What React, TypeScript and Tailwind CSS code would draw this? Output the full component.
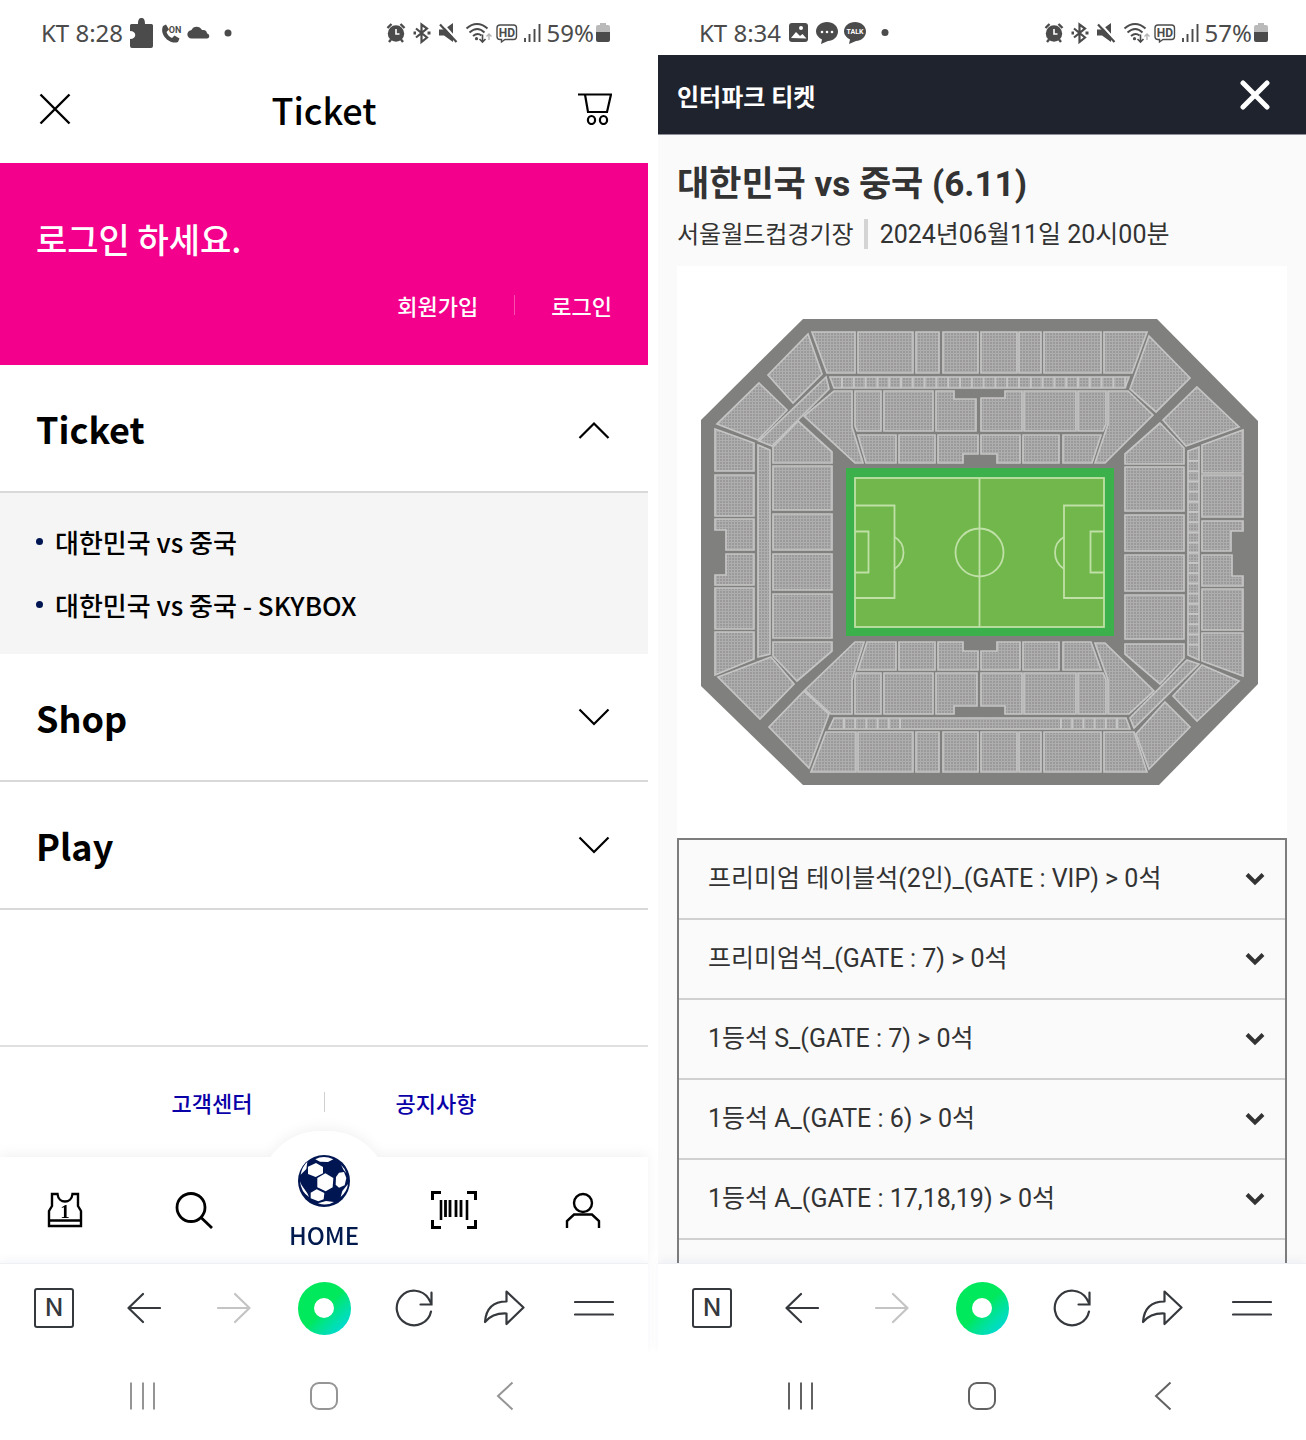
import React, { useState } from 'react';

interface StatusBarProps {
  time: string;
  battery: string;
  children: React.ReactNode;
}

const StatusBar = ({ time, battery, children }: StatusBarProps) => (
  <div className="h-[55px] pt-3 pr-[38px] pl-[41px] flex items-start justify-between text-[#4b4b4b]">
    <div className="h-[42px] flex items-center">
      <span className="font-['Noto_Sans',sans-serif] text-2xl mr-1.5">KT {time}</span>
      {children}
    </div>
    <div className="h-[42px] flex items-center">
      <svg width="162" height="24" viewBox="380 21 162 24" fill="none" stroke="currentColor" strokeWidth="2" className="shrink-0">
        {/* Alarm */}
        <circle cx="393" cy="33.500" r="8.200" fill="currentColor" stroke="none" />
        <path d="M384.500 28l4-4M401.500 28l-4-4M388 39.500l-2 2.500M398 39.500l2 2.500" strokeWidth="2.400" />
        <path d="M393 29v5h3.500" stroke="#fff" strokeWidth="1.600" />
        {/* Bluetooth */}
        <path d="M413 28.500l11 9-5.500 4.500V24.500l5.500 4-11 9" strokeWidth="2.200" />
        <path d="M410.500 33h2.500M424.500 33h3" strokeWidth="3" />
        {/* Muted */}
        <path d="M436 29.500h5l9-6.500v19l-9-6.500h-5z" fill="currentColor" stroke="none" />
        <path d="M438.500 22.500l16 18" stroke="#fff" strokeWidth="2.200" />
        <path d="M437 24.500l16.500 17.500" strokeWidth="2.200" />
        {/* Wifi */}
        <path d="M463.500 28.500c6.500-6 14.500-6 21 0M466.500 32.500c5-4.500 10.500-4.500 15 0M470 36c3-2.500 6-2.500 8.500-.5" strokeWidth="1.900" />
        <circle cx="473.500" cy="38.700" r="1.600" fill="currentColor" stroke="none" />
        <path d="M479.500 34.500v7M476.500 39l3 3 3-3" strokeWidth="1.600" />
        <path d="M486 40v-6M483.500 36.500l2.500-2.500 2.500 2.500" stroke="#b5b5b5" strokeWidth="1.400" />
        {/* HD voice */}
        <path d="M497 25h13.500a3 3 0 0 1 3 3v8.500a3 3 0 0 1-3 3H502l-3.500 2.500v-2.500H497a3 3 0 0 1-3-3V28a3 3 0 0 1 3-3z" strokeWidth="1.400" />
        <text x="504" y="37" fontSize="12" fontWeight="700" fill="currentColor" stroke="none" textAnchor="middle" className="font-['Roboto',sans-serif]">HD</text>
        {/* Signal */}
        <path d="M522 38v4M526.500 34v8M531.500 29v13M536.500 24v18" strokeWidth="1.900" />
      </svg>
      <span className="font-['Noto_Sans',sans-serif] text-2xl mx-0.5">{battery}</span>
      <svg width="14" height="20" viewBox="0 0 14 20" className="shrink-0">
        <path d="M4 2V0h6v2h2a2 2 0 0 1 2 2v6H0V4a2 2 0 0 1 2-2z" fill="#bababa" />
        <path d="M0 9h14v8a2 2 0 0 1-2 2H2a2 2 0 0 1-2-2z" fill="#4b4b4b" />
      </svg>
    </div>
  </div>
);

const iconButton = 'flex items-center justify-center cursor-pointer';

const BrowserBars = ({ faded }: { faded?: boolean }) => (
  <div className="relative bg-white">
    <div className="h-[89px] px-[9px] grid grid-cols-7 border-t border-[#eef0f4] shadow-[0_-3px_8px_rgba(70,90,160,0.06)] text-[#35383c]">
      <button aria-label="Naver" className={iconButton}>
        <span className="w-10 h-10 rounded-[3px] border-2 border-[#35383c] flex items-center justify-center font-['Inter',sans-serif] text-2xl font-medium">N</span>
      </button>
      <button aria-label="Back" className={iconButton}>
        <svg width="34" height="34" viewBox="0 0 34 34" fill="none" stroke="currentColor" strokeWidth="2.200" strokeLinecap="round" strokeLinejoin="round">
          <path d="M33 17H2M16 3L1.500 17 16 31" />
        </svg>
      </button>
      <button aria-label="Forward" className={iconButton}>
        <svg width="34" height="34" viewBox="0 0 34 34" fill="none" stroke="#c4c4c4" strokeWidth="2.200" strokeLinecap="round" strokeLinejoin="round">
          <path d="M1 17h31M18 3l14.500 14L18 31" />
        </svg>
      </button>
      <button aria-label="Green dot" className={iconButton}>
        <span className="w-[53px] h-[53px] rounded-full bg-linear-to-br from-[#00e85c] from-50% to-[#00d2f0] flex items-center justify-center">
          <span className="w-5 h-5 rounded-full bg-white" />
        </span>
      </button>
      <button aria-label="Reload" className={iconButton}>
        <svg width="38" height="38" viewBox="0 0 38 38" fill="none" stroke="currentColor" strokeWidth="2.200" strokeLinecap="round">
          <path d="M36 22.500A17.300 17.300 0 1 1 33.500 9.500L36.500 15M36.500 3.500v12H25.500" />
        </svg>
      </button>
      <button aria-label="Share" className={iconButton}>
        <svg width="42" height="36" viewBox="0 0 42 36" fill="none" stroke="currentColor" strokeWidth="2.200" strokeLinejoin="round">
          <path d="M23.500 1.500L40.500 17.500 23.500 34V23.500C13 23 7 26 2 32 3 18 11 11.500 23.500 11.500z" />
        </svg>
      </button>
      <button aria-label="Menu" className={iconButton}>
        <svg width="40" height="20" viewBox="0 0 40 20" fill="none" stroke="currentColor" strokeWidth="2.200" strokeLinecap="round">
          <path d="M1 4h38M1 16.500h38" />
        </svg>
      </button>
    </div>
    <div className={`relative h-[88px] px-[52px] grid grid-cols-3 bg-white ${faded ? 'text-[#959595]' : 'text-[#626262]'}`}>
      <button aria-label="Recent apps" className={iconButton}>
        <svg width="28" height="30" viewBox="0 0 28 30" fill="none" stroke="currentColor" strokeWidth="2">
          <path d="M2 1.500v27M14 1.500v27M25 1.500v27" />
        </svg>
      </button>
      <button aria-label="Home" className={iconButton}>
        <span className="w-7 h-7 rounded-[9px] border-2 border-current" />
      </button>
      <button aria-label="Go back" className={iconButton}>
        <svg width="18" height="30" viewBox="0 0 18 30" fill="none" stroke="currentColor" strokeWidth="2">
          <path d="M16.500 1.500L2 15l14.500 13.500" />
        </svg>
      </button>
    </div>
  </div>
);

const Chevron = ({ open }: { open: boolean }) => (
  <svg width="32" height="26" viewBox="0 0 32 26" fill="none" stroke="currentColor" strokeWidth="2.200">
    <path d={open ? 'M1.500 23L16 8.500 30.500 23' : 'M1.500 5.500L16 20 30.500 5.500'} />
  </svg>
);

const menus = [
  { title: 'Ticket', items: ['대한민국 vs 중국', '대한민국 vs 중국 - SKYBOX'] },
  { title: 'Shop', items: [] },
  { title: 'Play', items: [] },
];

const SoccerBall = () => (
  <svg width="52" height="52" viewBox="56 45 156 156">
    <circle cx="134" cy="123" r="78" fill="#001652" />
    <g fill="#fff">
      <path d="M138 100l24 14-2 28-21 12-25-12V114z" />
      <path d="M110 69l21 12v19l-22 11-23-9V80z" />
      <path d="M112 148l23 11-2 19-16 6-23-9V158z" />
      <path d="M179 98l15-2 7 18-5 22-17 7-10-9 1-23z" />
      <path d="M108 58q24-14 54 0l-16 8-24-1z" />
      <path d="M64 104q4-24 20-39l-3 22z" />
      <path d="M62 124l5 12 17 24 5 11q-24-15-27-47z" />
      <path d="M116 190l24-7 24 3q-22 13-48 4z" />
      <path d="M206 132q-3 23-22 39l5-18z" />
      <path d="M185 74q12 11 16 26l-8-10z" />
    </g>
  </svg>
);

const KfaScreen = () => {
  const [opened, setOpened] = useState('Ticket');

  return (
    <section className="min-w-0 flex flex-col bg-white font-['Noto_Sans_CJK_KR',sans-serif]">
      <StatusBar time="8:28" battery="59%">
        <svg width="108" height="32" viewBox="130 17 108 32" fill="currentColor" className="shrink-0">
          <path d="M132.500 24H139c0-5 1.500-6 3.500-6s3.500 1 3.500 6h6.500a1.500 1.500 0 0 1 1.500 1.500V46a2 2 0 0 1-2 2H133a2 2 0 0 1-2-2v-7c7 0 7-8 0-8v-5.500a1.500 1.500 0 0 1 1.500-1.500z" />
          <path d="M164 26l3-1.500 3 5-2.500 2.500c1 3 3 5 5.500 6l2.500-2.500 5 3-1.500 3.500c-8 3-19-7-15-16z" />
          <text x="176" y="33" fontSize="9" fontWeight="700" textAnchor="middle" className="font-['Roboto',sans-serif]">ON</text>
          <path d="M192.500 38.500c-5 0-6-7.500 0-8.500 1.500-4.500 8.500-4.500 10.500 0 3.500-.5 5 1.500 5 3.500 3 .5 3 5 0 5z" />
          <circle cx="229" cy="33" r="3.500" />
        </svg>
      </StatusBar>

      <header className="h-[108px] px-9 grid grid-cols-3 items-center">
        <button aria-label="닫기" className="justify-self-start px-[3px] cursor-pointer">
          <svg width="32" height="32" viewBox="0 0 32 32" fill="none" stroke="#000" strokeWidth="2.400">
            <path d="M1.500 1.500l29 29M30.500 1.500l-29 29" />
          </svg>
        </button>
        <h1 className="text-4xl leading-none font-medium text-center">Ticket</h1>
        <button aria-label="장바구니" className="justify-self-end cursor-pointer">
          <svg width="34" height="32" viewBox="0 0 34 32" fill="none" stroke="#000" strokeWidth="2.200">
            <path d="M0 1.500h33l-4 17.500H10L7 1.500" />
            <ellipse cx="13.500" cy="27" rx="3.600" ry="4" />
            <ellipse cx="25.500" cy="27" rx="3.600" ry="4" />
          </svg>
        </button>
      </header>

      <div className="h-[202px] px-9 pt-[51px] bg-[#f3008d] text-white">
        <p className="text-[34px] leading-[50px] font-medium">로그인 하세요.</p>
        <div className="mt-[23px] flex items-center justify-end gap-9 text-[22px] leading-9 font-medium">
          <a href="#join">회원가입</a>
          <span className="w-px h-5 bg-[#f84fb0]" />
          <a href="#login">로그인</a>
        </div>
      </div>

      {menus.map(menu => (
        <div key={menu.title}>
          <button
            aria-expanded={opened === menu.title}
            onClick={() => setOpened(opened === menu.title ? '' : menu.title)}
            className="w-full h-32 pl-9 pr-[38px] flex items-center justify-between border-b-2 border-[#d9d9d9] text-left cursor-pointer"
          >
            <span className="text-4xl leading-none font-bold">{menu.title}</span>
            <Chevron open={opened === menu.title} />
          </button>
          {opened === menu.title && menu.items.length > 0 && (
            <ul className="px-9 pt-[17px] pb-[18px] bg-[#f5f5f5]">
              {menu.items.map(item => (
                <li key={item} className="h-[63px] flex items-center gap-3">
                  <span className="w-[7px] h-[7px] rounded-full bg-[#001652]" />
                  <a href="#match" className="text-[26px] leading-none font-medium">{item}</a>
                </li>
              ))}
            </ul>
          )}
        </div>
      ))}

      <div className="flex-1" />

      <div className="h-[112px] pt-[37px] border-t-2 border-[#e0e0e0] flex justify-center gap-[71px] text-[22px] leading-9 font-medium text-[#0a00a8]">
        <a href="#help">고객센터</a>
        <span className="w-px h-5 mt-2 bg-[#cfcfcf]" />
        <a href="#notice">공지사항</a>
      </div>

      <nav className="relative h-[106px] drop-shadow-[0_-3px_6px_rgba(0,0,0,0.05)]">
        <span className="absolute left-1/2 -top-[26px] w-32 h-[120px] -translate-x-1/2 rounded-full bg-white" />
        <div className="relative h-full grid grid-cols-5 bg-white">
          <a href="#match" aria-label="경기" className={iconButton}>
            <svg width="36" height="36" viewBox="0 0 36 36" fill="none" stroke="#000" strokeWidth="2.400">
              <path d="M5 2h5.500c1 10 14 10 15 0H31v12l3 5v15H2V19l3-5zM2 28.500h32" />
              <text x="18" y="25.500" fontSize="19" fontWeight="700" fill="#000" stroke="none" textAnchor="middle" className="font-['Liberation_Serif',serif]">1</text>
            </svg>
          </a>
          <a href="#search" aria-label="검색" className={iconButton}>
            <svg width="38" height="38" viewBox="0 0 38 38" fill="none" stroke="#000" strokeWidth="2.800">
              <circle cx="16" cy="16.500" r="14" />
              <path d="M26 26.500l11 10.500" />
            </svg>
          </a>
          <a href="#home" className="-mt-0.5 flex flex-col items-center gap-3 text-[#001a4e]">
            <SoccerBall />
            <span className="text-2xl leading-8 font-medium">HOME</span>
          </a>
          <a href="#pass" aria-label="바코드" className={iconButton}>
            <svg width="46" height="38" viewBox="0 0 46 38" fill="none" stroke="#000" strokeWidth="3">
              <path d="M1.500 9V1.500H10M36 1.500h8.500V9M44.500 29v7.500H36M10 36.500H1.500V29" />
              <path d="M10 9v20M36 9v20" strokeWidth="2.600" />
              <path d="M14.500 9v17M19 9v17M25 9v17M30 9v17" strokeWidth="2.800" />
            </svg>
          </a>
          <a href="#my" aria-label="마이페이지" className={iconButton}>
            <svg width="36" height="36" viewBox="0 0 36 36" fill="none" stroke="#000" strokeWidth="2.400">
              <circle cx="18" cy="11" r="9" />
              <path d="M2 36v-7l7-6.500h18l7 6.500v7" />
            </svg>
          </a>
        </div>
      </nav>

      <BrowserBars faded />
    </section>
  );
};

// Seat blocks of the stadium, clockwise from the north stand
const blocks = [
  // north
  '812,332 855,332 855,373 827,373', '858,332 913,332 913,373 858,373', '916,332 939,332 939,373 916,373',
  '943,332 978,332 978,373 943,373', '981,332 1017,332 1017,373 981,373', '1019,332 1041,332 1041,373 1019,373',
  '1044,332 1101,332 1101,373 1044,373', '1104,332 1147,332 1132,373 1104,373',
  '830,377 1129,377 1125,388 834,388',
  '834,391 852,391 852,427 863,463 855,463 804,416', '855,391 881,391 881,431 857,431 855,426',
  '884,391 933,391 933,431 884,431', '936,391 954,391 954,399 976,399 976,431 936,431',
  '981,398 1005,398 1005,391 1022,391 1022,431 981,431', '1024,391 1076,391 1076,431 1024,431',
  '1078,391 1106,391 1106,424 1103,431 1078,431', '1108,391 1128,391 1153,415 1105,463 1095,463 1108,424',
  '858,435 896,435 896,463 866,463', '899,435 935,435 935,463 899,463',
  '938,435 978,435 978,454 963,454 963,463 938,463', '981,435 1020,435 1020,463 997,463 997,454 981,454',
  '1023,435 1059,435 1059,463 1023,463', '1063,435 1101,435 1092,463 1063,463',
  // north east
  '1149,336 1190,378 1156,412 1130,389', '1197,387 1239,427 1186,446 1163,420',
  // east
  '1160,423 1184,448 1184,464 1125,464 1125,454', '1125,467 1184,467 1184,511 1125,511',
  '1125,515 1184,515 1184,551 1125,551', '1125,555 1184,555 1184,591 1125,591',
  '1125,595 1184,595 1184,639 1125,639', '1125,644 1184,644 1184,658 1160,684 1125,654',
  '1188,451 1199,447 1199,660 1188,655',
  '1202,445 1243,430 1243,473 1202,473', '1202,475 1243,475 1243,517 1202,517',
  '1202,521 1243,521 1243,531 1231,531 1231,551 1202,551', '1202,555 1232,555 1232,576 1243,576 1243,586 1202,586',
  '1202,589 1243,589 1243,630 1202,630', '1202,633 1243,633 1243,676 1202,661',
  // south east
  '1187,660 1199,664 1134,728 1130,718', '1165,702 1190,727 1149,769 1136,734', '1202,665 1239,681 1197,721 1173,696',
  // south
  '855,642 864,642 852,680 852,714 831,714 805,690', '867,642 896,642 896,670 858,670',
  '899,642 935,642 935,670 899,670', '938,642 963,642 963,651 978,651 978,670 938,670',
  '981,651 997,651 997,642 1020,642 1020,670 981,670', '1023,642 1059,642 1059,670 1023,670',
  '1063,642 1091,642 1101,670 1063,670', '856,673 881,673 881,714 855,714 855,678',
  '884,673 933,673 933,714 884,714', '936,673 977,673 977,706 954,706 954,714 936,714',
  '981,673 1022,673 1022,714 1005,714 1005,706 981,706', '1024,673 1076,673 1076,714 1024,714',
  '1078,673 1103,673 1106,680 1106,714 1078,714', '1095,643 1105,643 1154,691 1129,714 1108,714 1108,680',
  '834,718 1126,718 1130,729 829,729',
  '826,732 856,732 856,772 811,772', '858,732 913,732 913,772 858,772', '916,732 939,732 939,772 916,772',
  '943,732 978,732 978,772 943,772', '981,732 1017,732 1017,772 981,772', '1019,732 1041,732 1041,772 1019,772',
  '1044,732 1101,732 1101,772 1044,772', '1104,732 1134,732 1147,772 1104,772',
  // south west
  '771,657 794,684 760,719 718,677', '804,691 829,714 809,768 769,727',
  // west
  '715,429 754,443 754,471 715,471', '715,475 754,475 754,516 715,516',
  '715,519 754,519 754,550 726,550 726,530 715,530', '726,554 754,554 754,585 715,585 715,575 726,575',
  '715,588 754,588 754,629 715,629', '715,632 754,632 754,659 715,675',
  '758,445 770,450 770,654 758,657',
  '798,421 832,452 832,463 773,463 773,447', '773,466 832,466 832,510 773,510',
  '773,514 832,514 832,550 773,550', '773,554 832,554 832,590 773,590',
  '773,594 832,594 832,638 773,638', '773,642 832,642 832,651 797,681 773,656',
  // north west
  '808,334 822,374 793,403 768,375', '759,383 787,410 758,440 717,424', '826,377 829,389 772,446 759,441',
];

const range = (from: number, to: number, step: number) => {
  const out: number[] = [];
  for (let v = from; v < to; v += step) out.push(v);
  return out;
};

const StadiumMap = () => (
  <svg viewBox="677 266 610 572" className="block w-full bg-white" role="img" aria-label="좌석 배치도">
    <defs>
      <pattern id="seats" width="3" height="3" patternUnits="userSpaceOnUse">
        <rect width="3" height="3" fill="#aeaeae" />
        <rect width="2" height="2" fill="#9b9999" />
      </pattern>
    </defs>
    <polygon points="803,319 1157,319 1258,421 1258,684 1159,785 803,785 701,686 701,420" fill="#80807e" />
    <g fill="url(#seats)" stroke="#c6c5c5" strokeWidth="1.700">
      {blocks.map(points => <polygon key={points} points={points} />)}
    </g>
    <g stroke="#c6c5c5" strokeWidth="2">
      {range(842, 1126, 11.8).map(x => <path key={x} d={`M${x} 377v11`} />)}
      {range(461, 652, 10.2).map(y => <path key={y} d={`M1188 ${y}h11`} />)}
      {range(844, 902, 11.2).map(x => <path key={x} d={`M${x} 718v11`} />)}
      {range(1061, 1120, 11.2).map(x => <path key={x} d={`M${x} 718v11`} />)}
    </g>
    <rect x="846" y="468" width="268" height="168" fill="#3cb04b" />
    <rect x="855" y="478" width="249" height="149" fill="#71b74b" />
    <g fill="none" stroke="#bfe0a6" strokeWidth="1.800">
      <rect x="855" y="478" width="249" height="149" />
      <path d="M979.500 478v149M855 505.500h39.500V598H855M855 531.500h13.500v41H855M1104 505.500h-40V598h40M1104 531.500h-13.500v41H1104" />
      <circle cx="979.500" cy="552.500" r="24" />
      <path d="M894.500 537q9 5 9 15.500t-9 16.500M1064 537q-9 5-9 15.500t9 16.500" />
    </g>
  </svg>
);

const seatGrades = [
  '프리미엄 테이블석(2인)_(GATE : VIP) > 0석',
  '프리미엄석_(GATE : 7) > 0석',
  '1등석 S_(GATE : 7) > 0석',
  '1등석 A_(GATE : 6) > 0석',
  '1등석 A_(GATE : 17,18,19) > 0석',
];

const InterparkScreen = () => (
  <section className="min-w-0 flex flex-col bg-[#fafafa] font-['Roboto','Noto_Sans_CJK_KR',sans-serif] text-[#333]">
    <div className="bg-white">
      <StatusBar time="8:34" battery="57%">
        <svg width="108" height="32" viewBox="787 17 108 32" fill="currentColor" className="shrink-0">
          <rect x="789" y="23" width="19" height="19" rx="3" />
          <path d="M791 38l5-6 4 4 2.500-2 4 4.500z" fill="#fff" />
          <circle cx="801" cy="28" r="2" fill="#fff" />
          <path d="M827 22c6 0 11 4 11 9.500S833 41 828 41l-7 3 1-4.500c-3.500-2-6-4.500-6-8C816 26 821 22 827 22z" />
          <g fill="#fff">
            <circle cx="822" cy="32" r="1.300" />
            <circle cx="827" cy="32" r="1.300" />
            <circle cx="832" cy="32" r="1.300" />
          </g>
          <path d="M855 22c6 0 11 4 11 9.500S861 41 856 41l-7 3 1-4.500c-3.500-2-6-4.500-6-8C844 26 849 22 855 22z" />
          <text x="855" y="34" fontSize="7" fontWeight="700" fill="#fff" textAnchor="middle" className="font-['Roboto',sans-serif]">TALK</text>
          <circle cx="885" cy="32.500" r="3.500" />
        </svg>
      </StatusBar>
    </div>

    <header className="h-20 pl-[19px] pr-9 flex items-center justify-between bg-[#1f232d] border-b border-[#8d9099] text-white">
      <span className="pt-1.5 text-2xl font-bold">인터파크 티켓</span>
      <button aria-label="닫기" className="cursor-pointer">
        <svg width="30" height="30" viewBox="0 0 30 30" fill="none" stroke="currentColor" strokeWidth="5" strokeLinecap="round">
          <path d="M3 3l24 24M27 3L3 27" />
        </svg>
      </button>
    </header>

    <main className="flex-1 flex flex-col px-[19px] pt-6">
      <h1 className="text-[35px] leading-[52px] font-bold">대한민국 vs 중국 (6.11)</h1>
      <p className="h-[55px] pt-2 flex items-start text-2xl leading-8">
        <span>서울월드컵경기장</span>
        <span className="w-1 h-[30px] ml-2.5 mr-3 bg-[#d4d4d4]" />
        <span className="text-[25px]">2024년06월11일 20시00분</span>
      </p>

      <StadiumMap />

      <ul className="flex-1 border-2 border-b-0 border-[#7d7d7d]">
        {seatGrades.map(grade => (
          <li key={grade} className="border-b-2 border-[#d0d0d0]">
            <button className="w-full h-[78px] pl-[29px] pr-5 flex items-center justify-between text-[25px] text-left cursor-pointer">
              {grade}
              <svg width="20" height="14" viewBox="0 0 20 14" fill="none" stroke="currentColor" strokeWidth="4">
                <path d="M2 2.500l8 8 8-8" />
              </svg>
            </button>
          </li>
        ))}
      </ul>
    </main>

    <BrowserBars />
  </section>
);

export default function App() {
  return (
    <div className="min-h-screen grid grid-cols-2 gap-[10px] bg-white text-black">
      <KfaScreen />
      <InterparkScreen />
    </div>
  );
}
